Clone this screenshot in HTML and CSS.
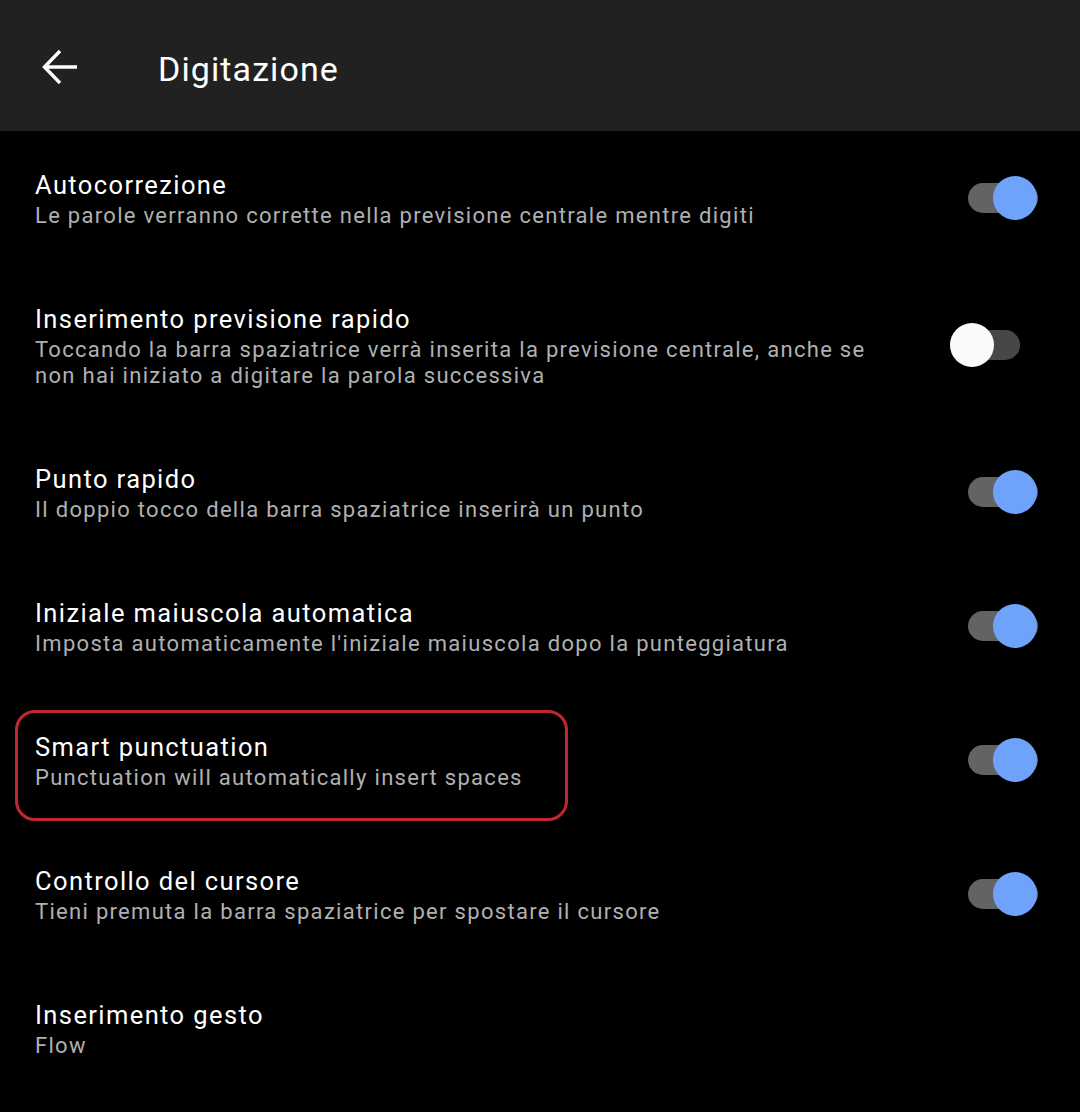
FILE: index.html
```html
<!DOCTYPE html>
<html lang="it">
<head>
<meta charset="utf-8">
<link rel="stylesheet" href="styles.css">
</head>
<body>
<header class="appbar">
  <svg class="back" width="36" height="36" viewBox="0 0 36 36"><path d="M35 18H3M18 2L2.5 18L18 34" fill="none" stroke="#fff" stroke-width="3.4"/></svg>
  <h1 class="title">Digitazione</h1>
</header>
<main class="list">
  <div class="row">
    <div class="text"><div class="t">Autocorrezione</div><div class="s">Le parole verranno corrette nella previsione centrale mentre digiti</div></div>
    <div class="switch on"><span class="track"></span><span class="thumb"></span></div>
  </div>
  <div class="row">
    <div class="text"><div class="t">Inserimento previsione rapido</div><div class="s">Toccando la barra spaziatrice verrà inserita la previsione centrale, anche se non hai iniziato a digitare la parola successiva</div></div>
    <div class="switch off"><span class="track"></span><span class="thumb"></span></div>
  </div>
  <div class="row">
    <div class="text"><div class="t">Punto rapido</div><div class="s">Il doppio tocco della barra spaziatrice inserirà un punto</div></div>
    <div class="switch on"><span class="track"></span><span class="thumb"></span></div>
  </div>
  <div class="row">
    <div class="text"><div class="t">Iniziale maiuscola automatica</div><div class="s">Imposta automaticamente l'iniziale maiuscola dopo la punteggiatura</div></div>
    <div class="switch on"><span class="track"></span><span class="thumb"></span></div>
  </div>
  <div class="row highlighted">
    <div class="text"><div class="t">Smart punctuation</div><div class="s">Punctuation will automatically insert spaces</div></div>
    <div class="switch on"><span class="track"></span><span class="thumb"></span></div>
    <div class="mark"></div>
  </div>
  <div class="row">
    <div class="text"><div class="t">Controllo del cursore</div><div class="s">Tieni premuta la barra spaziatrice per spostare il cursore</div></div>
    <div class="switch on"><span class="track"></span><span class="thumb"></span></div>
  </div>
  <div class="row">
    <div class="text"><div class="t">Inserimento gesto</div><div class="s">Flow</div></div>
  </div>
</main>
</body>
</html>
```
FILE: styles.css
```css
html, body {
  margin: 0;
  padding: 0;
  background: #000;
  font-family: Roboto, "Noto Sans", sans-serif;
  color: #fff;
}
.appbar {
  height: 131px;
  background: #212121;
  display: flex;
  align-items: center;
}
.back {
  margin-left: 42px;
  margin-top: 2px;
}
.title {
  margin: 0 0 0 80px;
  font-size: 34px;
  font-weight: 400;
  line-height: 40px;
  padding-top: 6px;
  letter-spacing: 1.1px;
  color: #fff;
}
.list {
  display: flex;
  flex-direction: column;
}
.row {
  position: relative;
  display: flex;
  align-items: center;
  padding: 38px 0 38px 35px;
}
.text {
  width: 850px;
}
.t {
  font-size: 25.5px;
  line-height: 32px;
  letter-spacing: 1.4px;
  color: #fff;
}
.s {
  font-size: 22px;
  line-height: 26px;
  letter-spacing: 1.3px;
  color: #b0b0b0;
  padding-top: 2px;
  margin-bottom: -2px;
}
.switch {
  position: relative;
  width: 70px;
  height: 44px;
  margin-left: auto;
}
.switch.on { margin-right: 42px; }
.switch.off { margin-right: 60px; }
.track {
  position: absolute;
  left: 0;
  top: 7px;
  width: 70px;
  height: 30px;
  border-radius: 15px;
  background: #636363;
}
.switch.off .track { background: #474747; }
.thumb {
  position: absolute;
  top: 0;
  width: 44px;
  height: 44px;
  border-radius: 50%;
}
.switch.on .thumb { right: 1px; background: #6fa2fb; }
.switch.off .thumb { left: 0; background: #fafafa; }
.mark {
  position: absolute;
  left: 15px;
  top: 17px;
  width: 547px;
  height: 105px;
  border: 3px solid #c1272d;
  border-radius: 20px;
}
```
